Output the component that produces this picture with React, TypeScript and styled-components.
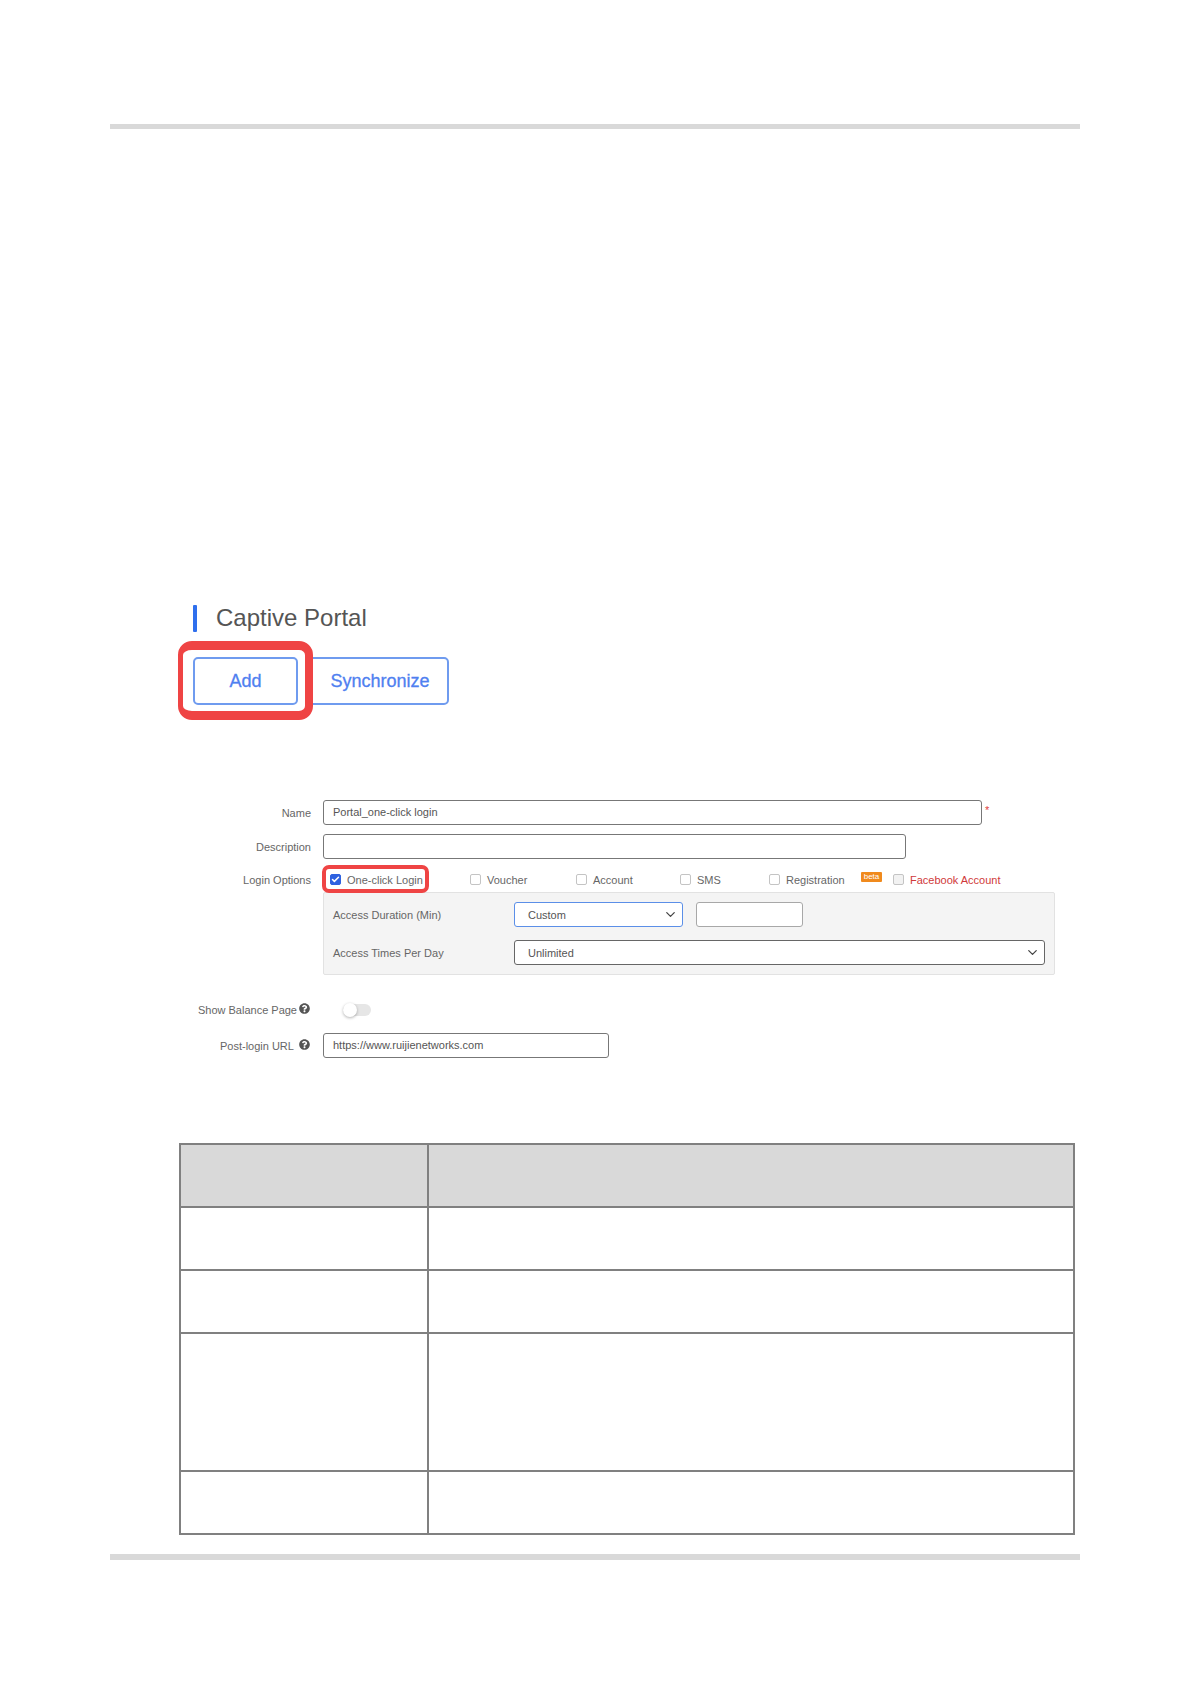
import { ChevronDown, Check } from "lucide-react";
import { FaQuestionCircle } from "react-icons/fa";
import styled, { createGlobalStyle } from "styled-components";

const GlobalStyle = createGlobalStyle`
  html, body {
    margin: 0;
    background: #ffffff;
    font-family: "Liberation Sans", Arial, sans-serif;
  }
`;

const Page = styled.div`
  width: 1191px;
  height: 1684px;
  box-sizing: border-box;
  padding: 124px 111px 0 110px;
  display: flex;
  flex-direction: column;
`;

const Rule = styled.div<{ $height: number }>`
  height: ${(p) => p.$height}px;
  flex: none;
  background: #d9d9d9;
`;

const Content = styled.div`
  height: 1425px;
  flex: none;
  box-sizing: border-box;
  padding: 476px 0 0 83px;
  display: flex;
  flex-direction: column;
`;

const TitleRow = styled.div`
  display: flex;
  align-items: center;
  gap: 19px;
  height: 27px;
`;

const TitleBar = styled.span`
  width: 4px;
  height: 27px;
  border-radius: 1px;
  background: #2f6fed;
`;

const Title = styled.h1`
  margin: -2px 0 0;
  font-size: 24px;
  font-weight: 400;
  color: #555555;
`;

const ButtonRow = styled.div`
  display: flex;
  gap: 10px;
  margin-top: 25px;
`;

const HighlightWrap = styled.div`
  position: relative;
  z-index: 1;
  display: flex;
  align-items: center;
  gap: 6px;
`;

const Highlight = styled.span`
  position: absolute;
  box-sizing: border-box;
  border-style: solid;
  border-color: #ef4444;
  pointer-events: none;
`;

const AddHighlight = styled(Highlight)`
  inset: -16px -15px -15px -15px;
  border-width: 9px 8px 9px 5px;
  border-radius: 14px;
`;

const LoginHighlight = styled(Highlight)`
  inset: -9px -6px -7px -8px;
  border-width: 4px;
  border-radius: 7px;
`;

const OutlineButton = styled.button<{ $width: number; $inset?: number }>`
  width: ${(p) => p.$width}px;
  height: 48px;
  padding: 0 0 0 ${(p) => p.$inset ?? 0}px;
  box-sizing: border-box;
  background: #ffffff;
  border: 2px solid #6f9bef;
  border-radius: 5px;
  color: #4f80f0;
  font: 400 18px "Liberation Sans", Arial, sans-serif;
  -webkit-text-stroke: 0.3px #4f80f0;
`;

const Form = styled.div`
  margin-top: 95px;
  display: flex;
  flex-direction: column;
`;

const FormRow = styled.div<{ $top: number; $height?: number }>`
  display: flex;
  align-items: center;
  gap: 12px;
  margin-top: ${(p) => p.$top}px;
  height: ${(p) => p.$height ?? 25}px;
`;

const Label = styled.label`
  width: 118px;
  flex: none;
  text-align: right;
  white-space: nowrap;
  font-size: 11px;
  color: #666666;
  display: flex;
  justify-content: flex-end;
  align-items: center;
  gap: 2px;
`;

const HelpIcon = styled(FaQuestionCircle)`
  width: 11px;
  height: 11px;
  margin: -3px 1px 0 0;
  color: #555555;
  flex: none;
`;

const TextBox = styled.div<{ $width: number; $muted?: boolean }>`
  width: ${(p) => p.$width}px;
  height: 25px;
  box-sizing: border-box;
  flex: none;
  display: flex;
  align-items: center;
  padding: 0 9px 2px;
  background: #ffffff;
  border: 1px solid ${(p) => (p.$muted ? "#a8a8a8" : "#777777")};
  border-radius: 3px;
  font-size: 11px;
  color: #555555;
`;

const Required = styled.span`
  margin-left: -9px;
  margin-top: -6px;
  font-size: 11px;
  color: #e04040;
`;

const Options = styled.div`
  display: flex;
  align-items: center;
  padding-left: 7px;
  height: 25px;
`;

const Option = styled.div<{ $width: number }>`
  width: ${(p) => p.$width}px;
  flex: none;
  display: flex;
  align-items: center;
  gap: 6px;
  font-size: 11px;
  color: #666666;
  white-space: nowrap;
`;

const Box = styled.span<{ $checked?: boolean; $disabled?: boolean }>`
  width: 11px;
  height: 11px;
  box-sizing: border-box;
  flex: none;
  display: flex;
  align-items: center;
  justify-content: center;
  border-radius: 2px;
  border: 1px solid ${(p) => (p.$checked ? "#2f62e0" : "#c4c4c4")};
  background: ${(p) => (p.$checked ? "#2f62e0" : p.$disabled ? "#f2f2f2" : "#ffffff")};
  color: #ffffff;
`;

const OptionText = styled.span<{ $danger?: boolean }>`
  color: ${(p) => (p.$danger ? "#d0393a" : "#666666")};
`;

const Beta = styled.span`
  width: 21px;
  height: 10px;
  flex: none;
  margin: -6px 11px 0 0;
  border-radius: 1px;
  background: #f08a1d;
  color: #ffffff;
  font-size: 8px;
  line-height: 10px;
  text-align: center;
`;

const Panel = styled.div`
  margin-left: 130px;
  width: 732px;
  height: 83px;
  box-sizing: border-box;
  padding: 9px 9px 0;
  background: #f4f4f4;
  border: 1px solid #e2e2e2;
  border-radius: 2px;
  display: flex;
  flex-direction: column;
  gap: 13px;
`;

const PanelRow = styled.div`
  display: flex;
  align-items: center;
  height: 25px;
`;

const PanelLabel = styled.span`
  width: 181px;
  flex: none;
  font-size: 11px;
  color: #666666;
`;

const SelectBox = styled.div<{ $width: number; $active?: boolean }>`
  width: ${(p) => p.$width}px;
  height: 25px;
  box-sizing: border-box;
  flex: none;
  display: flex;
  align-items: center;
  justify-content: space-between;
  padding: 0 4px 0 13px;
  background: #ffffff;
  border: 1px solid ${(p) => (p.$active ? "#5b8fe8" : "#666666")};
  border-radius: 3px;
  font-size: 11px;
  color: #555555;
`;

const NumberBox = styled(TextBox)`
  margin-left: 13px;
`;

const Toggle = styled.span`
  width: 28px;
  height: 12px;
  margin-left: 20px;
  border-radius: 6px;
  background: #e6e6e6;
  position: relative;
`;

const Knob = styled.span`
  position: absolute;
  left: 0;
  top: -1px;
  width: 14px;
  height: 14px;
  border-radius: 50%;
  background: #ffffff;
  box-shadow: 0 1px 3px rgba(0, 0, 0, 0.3);
`;

const SpecTable = styled.table`
  width: 896px;
  margin: 85px 0 0 -14px;
  border-collapse: collapse;
  table-layout: fixed;
`;

const HeadCell = styled.th`
  height: 61px;
  padding: 0;
  background: #d9d9d9;
  border: 2px solid #808080;
`;

const BodyCell = styled.td<{ $height: number }>`
  height: ${(p) => p.$height}px;
  padding: 0;
  border: 2px solid #808080;
`;

const FirstCol = styled.col`
  width: 248px;
`;

const rowHeights = [61, 61, 136, 61];

export default function App() {
  return (
    <>
      <GlobalStyle />
      <Page>
        <Rule $height={5} />
        <Content>
          <TitleRow>
            <TitleBar />
            <Title>Captive Portal</Title>
          </TitleRow>
          <ButtonRow>
            <HighlightWrap>
              <OutlineButton $width={105}>Add</OutlineButton>
              <AddHighlight />
            </HighlightWrap>
            <OutlineButton $width={141} $inset={3}>
              Synchronize
            </OutlineButton>
          </ButtonRow>

          <Form>
            <FormRow $top={0}>
              <Label>Name</Label>
              <TextBox $width={659}>Portal_one-click login</TextBox>
              <Required>*</Required>
            </FormRow>
            <FormRow $top={9}>
              <Label>Description</Label>
              <TextBox $width={583} />
            </FormRow>
            <FormRow $top={8}>
              <Label>Login Options</Label>
              <Options>
                <Option $width={140}>
                  <HighlightWrap>
                    <Box $checked>
                      <Check size={9} strokeWidth={4} />
                    </Box>
                    <OptionText>One-click Login</OptionText>
                    <LoginHighlight />
                  </HighlightWrap>
                </Option>
                <Option $width={106}>
                  <Box />
                  <OptionText>Voucher</OptionText>
                </Option>
                <Option $width={104}>
                  <Box />
                  <OptionText>Account</OptionText>
                </Option>
                <Option $width={89}>
                  <Box />
                  <OptionText>SMS</OptionText>
                </Option>
                <Option $width={92}>
                  <Box />
                  <OptionText>Registration</OptionText>
                </Option>
                <Beta>beta</Beta>
                <Option $width={120}>
                  <Box $disabled />
                  <OptionText $danger>Facebook Account</OptionText>
                </Option>
              </Options>
            </FormRow>
            <Panel>
              <PanelRow>
                <PanelLabel>Access Duration (Min)</PanelLabel>
                <SelectBox $width={169} $active>
                  Custom
                  <ChevronDown size={15} color="#444444" />
                </SelectBox>
                <NumberBox $width={107} $muted />
              </PanelRow>
              <PanelRow>
                <PanelLabel>Access Times Per Day</PanelLabel>
                <SelectBox $width={531}>
                  Unlimited
                  <ChevronDown size={15} color="#444444" />
                </SelectBox>
              </PanelRow>
            </Panel>
            <FormRow $top={23} $height={24}>
              <Label>
                Show Balance Page
                <HelpIcon />
              </Label>
              <Toggle>
                <Knob />
              </Toggle>
            </FormRow>
            <FormRow $top={11}>
              <Label>
                Post-login URL&nbsp;
                <HelpIcon />
              </Label>
              <TextBox $width={286}>https://www.ruijienetworks.com</TextBox>
            </FormRow>
          </Form>

          <SpecTable>
            <colgroup>
              <FirstCol />
              <col />
            </colgroup>
            <thead>
              <tr>
                <HeadCell />
                <HeadCell />
              </tr>
            </thead>
            <tbody>
              {rowHeights.map((height, i) => (
                <tr key={i}>
                  <BodyCell $height={height} />
                  <BodyCell $height={height} />
                </tr>
              ))}
            </tbody>
          </SpecTable>
        </Content>
        <Rule $height={6} />
      </Page>
    </>
  );
}
